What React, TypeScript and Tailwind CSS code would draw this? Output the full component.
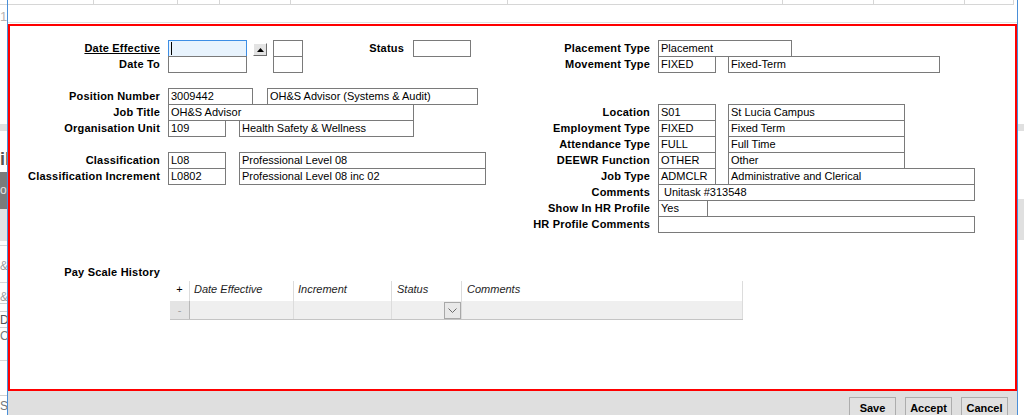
import type { ReactNode } from 'react'

function Box({ w, children, className = '' }: { w: string; children?: ReactNode; className?: string }) {
  return (
    <div
      className={`h-[17px] shrink-0 overflow-hidden whitespace-nowrap border border-[#7a7a7a] bg-white px-[2px] leading-[15px] ${w} ${className}`}
    >
      {children}
    </div>
  )
}

function Row({ label, children, underline }: { label?: string; children?: ReactNode; underline?: boolean }) {
  return (
    <div className="flex h-4 items-start">
      <div
        className={`w-[150px] shrink-0 whitespace-nowrap text-right font-bold leading-4 tracking-[0.2px] ${underline ? 'underline' : ''}`}
      >
        {label}
      </div>
      <div className="ml-2 flex items-start">{children}</div>
    </div>
  )
}

function TopGrid() {
  const cells = ['w-[86px]', 'w-[84px]', 'w-[42px]', 'w-[71px]', 'w-[217px]', 'w-[275px]', 'w-[91px]', 'w-[91px]', 'w-[49px]']
  return (
    <div className="flex h-[24px] shrink-0 flex-col bg-white">
      <div className="flex h-[5px]">
        {cells.map((c, i) => (
          <div key={i} className={`h-[5px] border-b border-r border-[#d6d6d6] ${c}`} />
        ))}
      </div>
      <div className="h-[17px]" />
      <div className="h-px bg-[#e2e2e2]" />
      <div className="h-px" />
    </div>
  )
}

function LeftStrip() {
  return (
    <div className="flex w-[7px] shrink-0 flex-col overflow-hidden whitespace-nowrap bg-white text-[#9c9c9c]">
      <div className="h-[5px] shrink-0 border-b border-[#d6d6d6]" />
      <div className="mt-[6px] h-[12px] shrink-0 text-[13px] leading-[12px] text-[#b4b4b4]">13</div>
      <div className="h-[101px] shrink-0" />
      <div className="h-[7px] shrink-0 bg-[#e0e0e0]" />
      <div className="h-[41px] shrink-0 pt-[18px] text-[18px] font-bold leading-[20px] text-[#555]">il</div>
      <div className="h-[37px] shrink-0 bg-[#7b7b7b] text-[12px] leading-[37px] text-[#e4e4e4]">o:</div>
      <div className="h-[32px] shrink-0 bg-[#e3e3e3]" />
      <div className="h-[5px] shrink-0 border-b border-[#d8d8d8]" />
      <div className="h-[30px] shrink-0 pt-[14px] text-[12px] leading-[12px]">&amp;</div>
      <div className="h-[7px] shrink-0 border-b border-[#d8d8d8]" />
      <div className="h-[20px] shrink-0 pt-[8px] text-[12px] leading-[12px]">&amp;</div>
      <div className="h-[8px] shrink-0 border-t border-[#d0d0d0]" />
      <div className="h-[16px] shrink-0 border-t border-[#d0d0d0] text-[12px] leading-[16px] text-[#555]">D</div>
      <div className="h-[16px] shrink-0 border-t border-[#d0d0d0] text-[12px] leading-[16px] text-[#777]">C</div>
      <div className="h-[18px] shrink-0 border-b border-[#d8d8d8]" />
      <div className="h-[34px] shrink-0" />
      <div className="flex-1 border-t border-[#d0d0d0] pt-[2px] text-[12px] leading-[16px] text-[#777]">S</div>
    </div>
  )
}

function RightStrip() {
  return (
    <div className="flex w-[6px] shrink-0 flex-col bg-white">
      <div className="h-[124px] shrink-0" />
      <div className="h-[7px] shrink-0 bg-[#e0e0e0]" />
      <div className="h-[68px] shrink-0" />
      <div className="h-[41px] shrink-0 bg-[#e0e0e0]" />
    </div>
  )
}

function PayScaleTable() {
  return (
    <div className="ml-[160px] mt-px flex w-[573px] flex-col">
      <div className="flex h-5 italic leading-[17px] text-[#1e1e1e]">
        <div className="w-[20px] border-r border-[#dcdcdc] text-center not-italic text-black">+</div>
        <div className="w-[104px] border-r border-[#dcdcdc] pl-1">Date Effective</div>
        <div className="w-[98px] border-r border-[#dcdcdc] pl-1">Increment</div>
        <div className="w-[70px] border-r border-[#dcdcdc] pl-[5px]">Status</div>
        <div className="w-[281px] border-r border-[#dcdcdc] pl-[5px]">Comments</div>
      </div>
      <div className="flex h-[19px] border-b border-[#c4c4c4] bg-[#efefef]">
        <div className="w-[20px] border-r border-[#b8b8b8] bg-[#e4e4e4] text-center leading-[18px] text-[#a0a0a0]">-</div>
        <div className="w-[104px] border-r border-[#dcdcdc]" />
        <div className="w-[98px] border-r border-[#dcdcdc]" />
        <div className="flex w-[70px] justify-end border-r border-[#dcdcdc] pt-px">
          <div className="flex h-[17px] w-[17px] items-center justify-center border border-[#a8a8a8] bg-[#e8e8e8]">
            <svg width="9" height="5" viewBox="0 0 9 5">
              <polyline points="0.5,0.5 4.5,4.5 8.5,0.5" fill="none" stroke="#6a6a6a" strokeWidth="1" />
            </svg>
          </div>
        </div>
        <div className="w-[281px] border-r border-[#dcdcdc]" />
      </div>
    </div>
  )
}

function LeftColumn() {
  return (
    <div className="flex w-[490px] shrink-0 flex-col pt-[14px]">
      <Row label="Date Effective" underline>
        <div className="flex h-[17px] w-[79px] shrink-0 items-start border border-[#3d8ee5] bg-[#e8f3fd]">
          <span className="ml-[2px] mt-px h-[13px] w-px bg-black" />
        </div>
        <div className="ml-[6px] mt-[3px] flex h-[13px] w-[14px] shrink-0 items-center justify-center border-b border-l border-r border-t border-b-[#6d6d6d] border-l-white border-r-[#6d6d6d] border-t-white bg-[#e3e3e3]">
          <svg width="7" height="4" viewBox="0 0 7 4">
            <polygon points="3.5,0 7,4 0,4" fill="#000" />
          </svg>
        </div>
        <Box w="w-[30px]" className="ml-[6px]" />
        <div className="w-[101px] shrink-0 text-right font-bold leading-4 tracking-[0.2px]">Status</div>
        <Box w="w-[58px]" className="ml-[9px]" />
      </Row>
      <Row label="Date To">
        <Box w="w-[79px]" />
        <Box w="w-[30px]" className="ml-[26px]" />
      </Row>
      <div className="h-4" />
      <Row label="Position Number">
        <Box w="w-[85px]">3009442</Box>
        <Box w="w-[211px]" className="ml-[14px]">OH&amp;S Advisor (Systems &amp; Audit)</Box>
      </Row>
      <Row label="Job Title">
        <Box w="w-[246px]">OH&amp;S Advisor</Box>
      </Row>
      <Row label="Organisation Unit">
        <Box w="w-[58px]">109</Box>
        <Box w="w-[175px]" className="ml-[13px]">Health Safety &amp; Wellness</Box>
      </Row>
      <div className="h-4" />
      <Row label="Classification">
        <Box w="w-[58px]">L08</Box>
        <Box w="w-[247px]" className="ml-[13px]">Professional Level 08</Box>
      </Row>
      <Row label="Classification Increment">
        <Box w="w-[58px]">L0802</Box>
        <Box w="w-[247px]" className="ml-[13px]">Professional Level 08 inc 02</Box>
      </Row>
      <div className="h-[80px]" />
      <Row label="Pay Scale History" />
      <PayScaleTable />
    </div>
  )
}

function RightColumn() {
  return (
    <div className="flex flex-1 flex-col pt-[14px]">
      <Row label="Placement Type">
        <Box w="w-[134px]">Placement</Box>
      </Row>
      <Row label="Movement Type">
        <Box w="w-[58px]">FIXED</Box>
        <Box w="w-[212px]" className="ml-[12px]">Fixed-Term</Box>
      </Row>
      <div className="h-8" />
      <Row label="Location">
        <Box w="w-[58px]">S01</Box>
        <Box w="w-[177px]" className="ml-[12px]">St Lucia Campus</Box>
      </Row>
      <Row label="Employment Type">
        <Box w="w-[58px]">FIXED</Box>
        <Box w="w-[177px]" className="ml-[12px]">Fixed Term</Box>
      </Row>
      <Row label="Attendance Type">
        <Box w="w-[58px]">FULL</Box>
        <Box w="w-[177px]" className="ml-[12px]">Full Time</Box>
      </Row>
      <Row label="DEEWR Function">
        <Box w="w-[58px]">OTHER</Box>
        <Box w="w-[177px]" className="ml-[12px]">Other</Box>
      </Row>
      <Row label="Job Type">
        <Box w="w-[58px]">ADMCLR</Box>
        <Box w="w-[247px]" className="ml-[12px]">Administrative and Clerical</Box>
      </Row>
      <Row label="Comments">
        <Box w="w-[317px]" className="pl-[5px]">Unitask #313548</Box>
      </Row>
      <Row label="Show In HR Profile">
        <Box w="w-[50px]">Yes</Box>
      </Row>
      <Row label="HR Profile Comments">
        <Box w="w-[317px]" />
      </Row>
    </div>
  )
}

export default function App() {
  return (
    <div className="flex h-[415px] w-[1024px] overflow-hidden bg-white font-['Liberation_Sans',Arial,sans-serif] text-[11px] text-black">
      <LeftStrip />
      <div className="w-px shrink-0 bg-[#4a8fd8]" />
      <div className="flex w-[1009px] shrink-0 flex-col">
        <TopGrid />
        {/* Form area */}
        <div className="flex h-[367px] shrink-0 border-2 border-[#ff0000] bg-white">
          <LeftColumn />
          <RightColumn />
        </div>
        {/* Buttons */}
        <div className="flex h-[24px] shrink-0 items-start justify-end gap-[9px] overflow-hidden bg-[#dfdfdf] pr-[9px] pt-[6px]">
          {['Save', 'Accept', 'Cancel'].map((b) => (
            <button
              key={b}
              className="flex h-[22px] w-[47px] shrink-0 items-center justify-center border border-[#adadad] bg-[#e1e1e1] text-[11px] font-bold text-black"
            >
              {b}
            </button>
          ))}
        </div>
      </div>
      <div className="w-px shrink-0 bg-[#4a8fd8]" />
      <RightStrip />
    </div>
  )
}
